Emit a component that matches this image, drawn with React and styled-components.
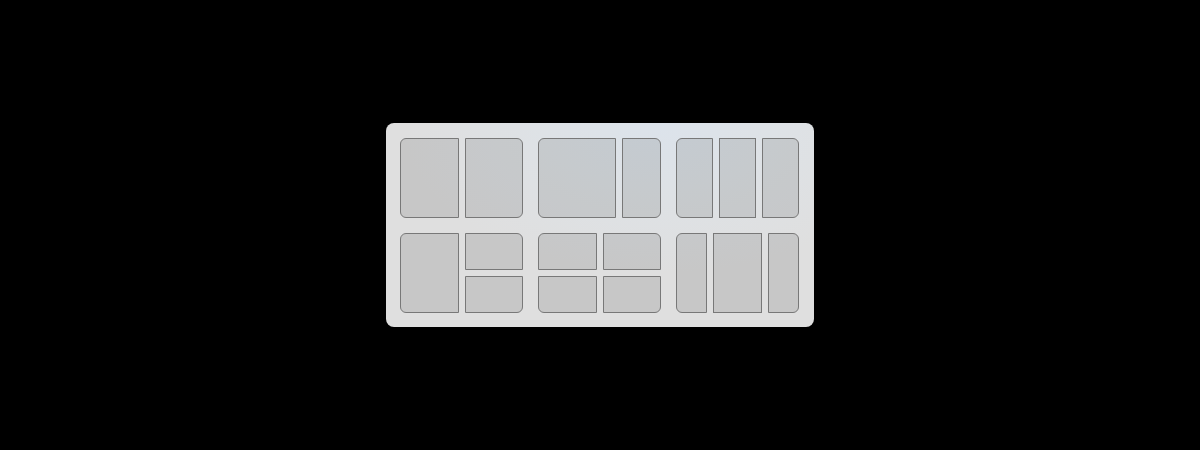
import styled, { createGlobalStyle } from 'styled-components'

const GlobalStyle = createGlobalStyle`
    html, body {
        margin: 0;
        padding: 0;
        background: #000;
        font-family: "Segoe UI", "Noto Sans", sans-serif;
    }
`

const layouts = [
    {
        columns: '59px 58px',
        rows: '1fr',
        tiles: [
            { area: '1 / 1 / 2 / 2', corners: 'tl bl' },
            { area: '1 / 2 / 2 / 3', corners: 'tr br' },
        ],
    },
    {
        columns: '78px 39px',
        rows: '1fr',
        tiles: [
            { area: '1 / 1 / 2 / 2', corners: 'tl bl' },
            { area: '1 / 2 / 2 / 3', corners: 'tr br' },
        ],
    },
    {
        columns: '37px 37px 37px',
        rows: '1fr',
        tiles: [
            { area: '1 / 1 / 2 / 2', corners: 'tl bl' },
            { area: '1 / 2 / 2 / 3', corners: '' },
            { area: '1 / 3 / 2 / 4', corners: 'tr br' },
        ],
    },
    {
        columns: '59px 58px',
        rows: '1fr 1fr',
        tiles: [
            { area: '1 / 1 / 3 / 2', corners: 'tl bl' },
            { area: '1 / 2 / 2 / 3', corners: 'tr' },
            { area: '2 / 2 / 3 / 3', corners: 'br' },
        ],
    },
    {
        columns: '59px 58px',
        rows: '1fr 1fr',
        tiles: [
            { area: '1 / 1 / 2 / 2', corners: 'tl' },
            { area: '1 / 2 / 2 / 3', corners: 'tr' },
            { area: '2 / 1 / 3 / 2', corners: 'bl' },
            { area: '2 / 2 / 3 / 3', corners: 'br' },
        ],
    },
    {
        columns: '31px 49px 31px',
        rows: '1fr',
        tiles: [
            { area: '1 / 1 / 2 / 2', corners: 'tl bl' },
            { area: '1 / 2 / 2 / 3', corners: '' },
            { area: '1 / 3 / 2 / 4', corners: 'tr br' },
        ],
    },
]

function App() {
    return (
        <>
            <GlobalStyle />
            <Stage>
                <Flyout>
                    {layouts.map((layout, index) => (
                        <Layout key={index} $columns={layout.columns} $rows={layout.rows}>
                            {layout.tiles.map((tile, i) => (
                                <Tile key={i} $area={tile.area} $corners={tile.corners} />
                            ))}
                        </Layout>
                    ))}
                </Flyout>
            </Stage>
        </>
    )
}

const Stage = styled.div`
    width: 1200px;
    height: 450px;
    box-sizing: border-box;
    padding-top: 123px;
    padding-left: 386px;
`

const Flyout = styled.div`
    width: 428px;
    height: 204px;
    box-sizing: border-box;
    padding: 15px 15px 14px 14px;

    display: grid;
    grid-template-columns: repeat(3, 123px);
    grid-template-rows: 80px 80px;
    column-gap: 15px;
    row-gap: 15px;

    border-radius: 8px;
    background:
        radial-gradient(ellipse 260px 150px at 64% 0%, #dce3eb 0%, #dee2e6 45%, rgba(223, 223, 223, 0) 100%),
        #dfdfdf;
`

const Layout = styled.div`
    display: grid;
    grid-template-columns: ${(p) => p.$columns};
    grid-template-rows: ${(p) => p.$rows};
    gap: 6px;
`

const r = (corners, key) => (corners.includes(key) ? '6px' : '0')

const Tile = styled.div`
    grid-area: ${(p) => p.$area};
    box-sizing: border-box;
    background: rgba(0, 0, 0, 0.105);
    border: 1px solid #787878;
    border-radius: ${(p) => `${r(p.$corners, 'tl')} ${r(p.$corners, 'tr')} ${r(p.$corners, 'br')} ${r(p.$corners, 'bl')}`};
`

export default App
